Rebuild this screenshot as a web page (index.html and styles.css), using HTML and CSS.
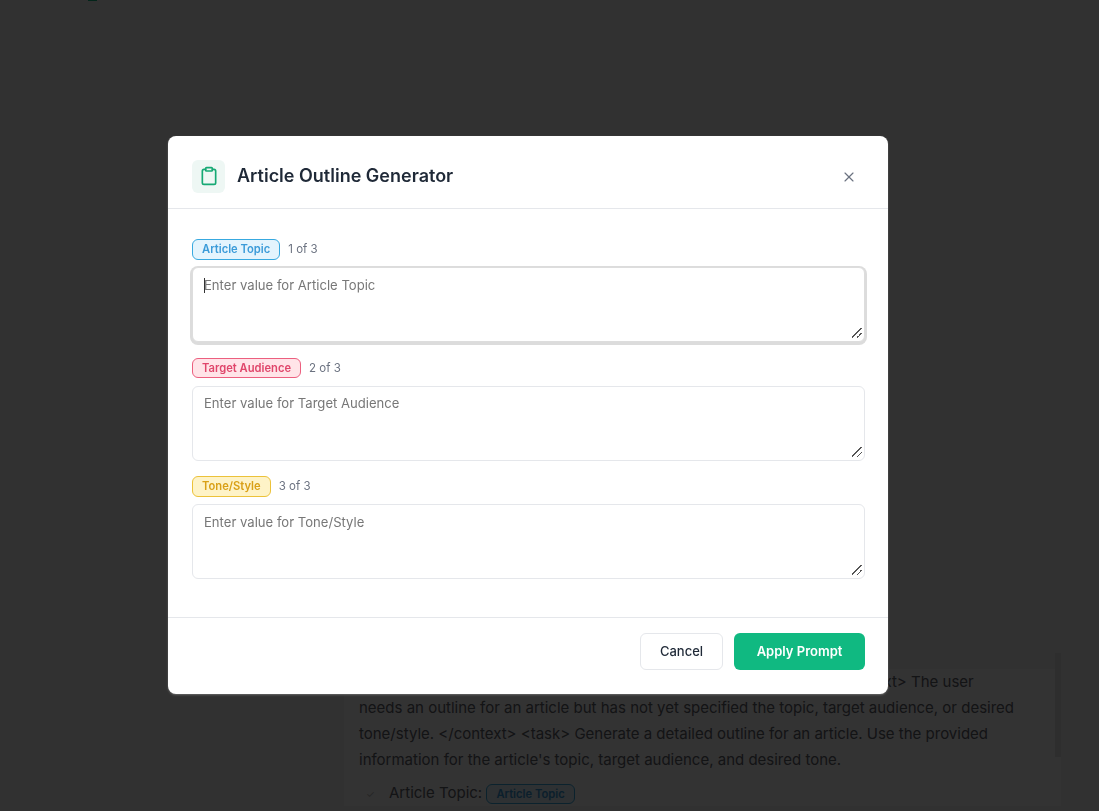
FILE: index.html
```html
<!DOCTYPE html>
<html lang="en">
<head>
<meta charset="utf-8">
<title>Article Outline Generator</title>
<link rel="stylesheet" href="styles.css">
</head>
<body>
<div class="page">
  <div class="top-mark"></div>
  <main class="content">
    <article class="prompt-card">
      <p class="prompt-text">&lt;role&gt; You are an expert content strategist and copywriter &lt;/role&gt; &lt;context&gt; The user needs an outline for an article but has not yet specified the topic, target audience, or desired tone/style. &lt;/context&gt; &lt;task&gt; Generate a detailed outline for an article. Use the provided information for the article's topic, target audience, and desired tone.</p>
      <ul class="prompt-list">
        <li>Article Topic: <span class="chip chip-blue">Article Topic</span></li>
      </ul>
    </article>
    <div class="page-scroll"></div>
  </main>
</div>
<div class="overlay">
  <section class="modal" role="dialog" aria-labelledby="modal-title">
    <header class="modal-header">
      <div class="modal-icon">
        <svg width="20" height="20" viewBox="0 0 24 24" fill="none" stroke="#16a974" stroke-width="2" stroke-linecap="round" stroke-linejoin="round"><rect x="8" y="2" width="8" height="4" rx="1"/><path d="M16 4h2a2 2 0 0 1 2 2v14a2 2 0 0 1-2 2H6a2 2 0 0 1-2-2V6a2 2 0 0 1 2-2h2"/></svg>
      </div>
      <h2 class="modal-title" id="modal-title">Article Outline Generator</h2>
      <button class="modal-close" type="button" aria-label="Close">
        <svg width="16" height="16" viewBox="0 0 24 24" fill="none" stroke="#6b7280" stroke-width="1.75" stroke-linecap="round" stroke-linejoin="round"><path d="M18 6 6 18"/><path d="m6 6 12 12"/></svg>
      </button>
    </header>
    <div class="modal-body">
      <div class="field">
        <div class="field-label"><span class="chip chip-blue">Article Topic</span><span class="field-count">1 of 3</span></div>
        <div class="input-wrap">
          <textarea class="field-input field-input-focus" placeholder="Enter value for Article Topic"></textarea>
          <span class="caret"></span>
        </div>
      </div>
      <div class="field">
        <div class="field-label"><span class="chip chip-red">Target Audience</span><span class="field-count">2 of 3</span></div>
        <div class="input-wrap">
          <textarea class="field-input" placeholder="Enter value for Target Audience"></textarea>
        </div>
      </div>
      <div class="field">
        <div class="field-label"><span class="chip chip-yellow">Tone/Style</span><span class="field-count">3 of 3</span></div>
        <div class="input-wrap">
          <textarea class="field-input" placeholder="Enter value for Tone/Style"></textarea>
        </div>
      </div>
    </div>
    <footer class="modal-footer">
      <button class="btn btn-cancel" type="button">Cancel</button>
      <button class="btn btn-apply" type="button">Apply Prompt</button>
    </footer>
  </section>
</div>
</body>
</html>
```
FILE: styles.css
```css
* { box-sizing: border-box; }
html, body { margin: 0; height: 100%; overflow: hidden; }
body { font-family: Inter, "Liberation Sans", sans-serif; background: #f6f6f6; color: #1f2937; }
.page { height: 811px; position: relative; overflow: hidden; }
.top-mark { position: absolute; left: 88px; top: 0; width: 9px; height: 1px; background: #10b981; }
.content { display: flex; justify-content: flex-end; padding-top: 669px; padding-right: 38px; }
.prompt-card { width: 717px; padding: 0 44px 0 15px; background: #fff; }
.prompt-text { margin: 0; font-size: 15px; line-height: 26px; color: #5f636b; }
.prompt-list { margin: 7px 0 0; padding: 0 0 0 30px; list-style: none; font-size: 15px; line-height: 26px; color: #5f636b; }
.prompt-list li { position: relative; }
.prompt-list li::before { content: "\2713"; position: absolute; left: -23px; top: 1px; font-size: 10px; color: #b8b8b8; }
.page-scroll { position: absolute; left: 1055px; top: 653px; width: 6px; height: 104px; background: #e4e4e4; }
.overlay { position: fixed; inset: 0; background: rgba(0, 0, 0, 0.8); display: flex; align-items: flex-start; justify-content: center; padding-top: 136px; padding-right: 43px; }
.modal { width: 720px; height: 558px; background: #fff; border-radius: 8px; display: flex; flex-direction: column; box-shadow: 0 1px 2px rgba(255,255,255,.25); }
.modal-header { display: flex; align-items: center; height: 73px; padding: 8px 24px 0; border-bottom: 1px solid #e5e7eb; gap: 12px; }
.modal-icon { width: 33px; height: 33px; border-radius: 6px; background: #eef7f4; display: flex; align-items: center; justify-content: center; }
.modal-title { margin: 0 0 2px; font-size: 18px; font-weight: 600; color: #1f2937; flex: 1; }
.modal-close { width: 28px; height: 28px; padding: 0; border: 0; background: none; display: flex; align-items: center; justify-content: center; margin-right: 1px; margin-top: 1px; }
.modal-body { flex: 1; padding: 30.2px 23px 0 24px; display: flex; flex-direction: column; gap: 15.3px; }
.field { display: flex; flex-direction: column; gap: 7.6px; }
.field-label { display: flex; align-items: center; gap: 8px; height: 20.6px; }
.chip { display: inline-flex; align-items: center; height: 20.6px; padding: 0 9px; border-radius: 6px; border: 1px solid; font-size: 11.2px; font-weight: 600; vertical-align: middle; }
.chip-blue { color: #3b9bd9; background: #e4f4fd; border-color: #38a9e0; }
.chip-red { color: #e0466b; background: #ffe4e8; border-color: #ec5f7f; }
.chip-yellow { color: #d9a017; background: #fef3c7; border-color: #ecc23a; }
.field-count { font-size: 11.5px; color: #6b7280; }
.input-wrap { position: relative; }
.field-input { display: block; width: 673px; height: 75px; padding: 7.4px 11px; border: 1px solid #e5e7eb; border-radius: 6px; font: 13.1px/18px Inter, "Liberation Sans", sans-serif; color: #1f2937; background: #fff; resize: vertical; outline: none; }
.field-input::placeholder { color: #777; opacity: 1; }
.field-input::-webkit-resizer { background: linear-gradient(135deg, transparent 43%, #555 43%, #555 54%, transparent 54%, transparent 70%, #555 70%, #555 79%, transparent 79%) no-repeat calc(100% - 2px) calc(100% - 3px) / 10px 10px; }
.field-input-focus { border-color: #ddd; box-shadow: 0 1px 0 2px #dcdcdc; }
.caret { position: absolute; left: 12px; top: 11px; width: 1px; height: 15px; background: #333; }
.modal-footer { display: flex; justify-content: flex-end; gap: 11px; height: 77px; padding: 15px 23px 0 24px; border-top: 1px solid #e5e7eb; }
.btn { height: 37px; padding: 0 0 2px; border-radius: 6px; font: 500 13px Inter, "Liberation Sans", sans-serif; }
.btn-cancel { width: 83px; background: #fff; color: #1f2937; border: 1px solid #e5e7eb; }
.btn-apply { width: 131px; background: #10b981; color: #fff; border: 0; font-weight: 600; }
```
